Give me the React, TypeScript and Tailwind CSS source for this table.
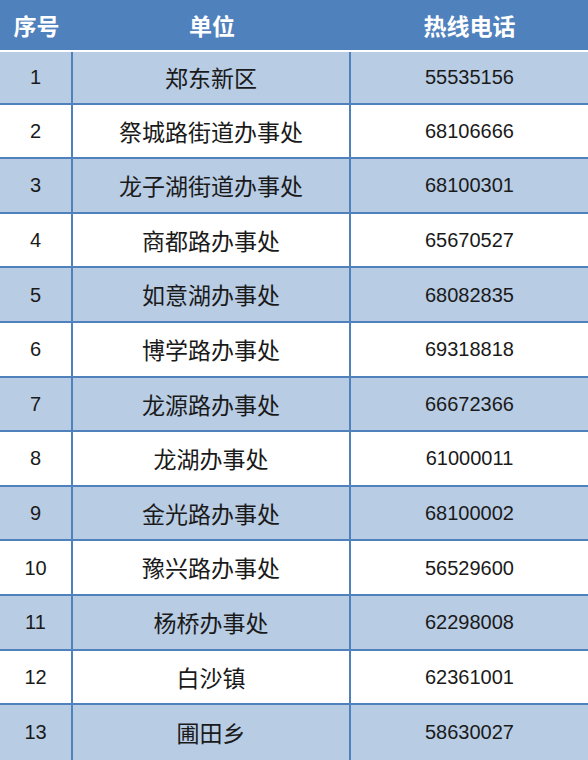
const rows: [string, string, string][] = [
  ["1", "郑东新区", "55535156"],
  ["2", "祭城路街道办事处", "68106666"],
  ["3", "龙子湖街道办事处", "68100301"],
  ["4", "商都路办事处", "65670527"],
  ["5", "如意湖办事处", "68082835"],
  ["6", "博学路办事处", "69318818"],
  ["7", "龙源路办事处", "66672366"],
  ["8", "龙湖办事处", "61000011"],
  ["9", "金光路办事处", "68100002"],
  ["10", "豫兴路办事处", "56529600"],
  ["11", "杨桥办事处", "62298008"],
  ["12", "白沙镇", "62361001"],
  ["13", "圃田乡", "58630027"],
];

const cjk = { fontFamily: '"Noto Sans CJK SC", sans-serif' };
const num = { fontFamily: '"Liberation Sans", "Noto Sans CJK SC", sans-serif' };

export default function App() {
  return (
    <div className="w-[588px] h-[760px] overflow-hidden bg-white" style={cjk}>
      {/* Header */}
      <div className="grid grid-cols-[73px_278px_1fr] h-[52px] bg-[#4f81bd] border-b-2 border-white text-white text-[23px] font-bold">
        <div className="flex items-center justify-center">序号</div>
        <div className="flex items-center justify-center">单位</div>
        <div className="flex items-center justify-center">热线电话</div>
      </div>

      {/* Rows */}
      <div className="flex flex-col divide-y-2 divide-[#4f81bd]">
        {rows.map(([no, name, tel], i) => (
          <div
            key={no}
            className={
              "grid grid-cols-[73px_278px_1fr] h-[54.6px] first:h-[52.6px] text-[#1a1a1a] " +
              (i % 2 === 0 ? "bg-[#b8cce4]" : "bg-white")
            }
          >
            <div className="flex items-center justify-center border-r-2 border-[#4f81bd] text-[20px]" style={num}>
              {no}
            </div>
            <div className="flex items-center justify-center border-r-2 border-[#4f81bd] text-[23px]">
              {name}
            </div>
            <div className="flex items-center justify-center text-[20px]" style={num}>
              {tel}
            </div>
          </div>
        ))}
      </div>
    </div>
  );
}
